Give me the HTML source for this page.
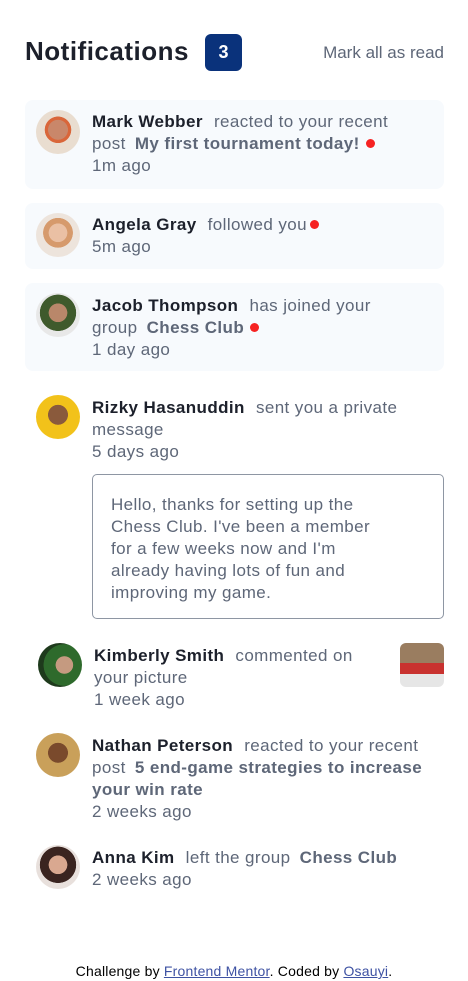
<!DOCTYPE html>
<html><head><meta charset="utf-8"><style>
*{margin:0;padding:0;box-sizing:border-box}
body{width:468px;height:981px;background:#fff;font-family:"Liberation Sans",sans-serif;color:#5e6778;position:relative;overflow:hidden}
.a{position:absolute}
h1{position:absolute;left:25px;top:36px;font-size:26px;font-weight:bold;color:#1c202b;letter-spacing:0.5px}
.badge{left:205px;top:34px;width:37px;height:37px;background:#0a327b;border-radius:6px;color:#fff;font-weight:bold;font-size:18px;text-align:center;line-height:37px}
.mark{right:24px;top:43px;font-size:17px}
.card{position:absolute;left:25px;width:419px;background:#f7fafd;border-radius:8px}
.av{position:absolute;width:44px;height:44px;border-radius:50%}
.t{position:absolute;font-size:17px;line-height:22px;white-space:nowrap;letter-spacing:0.4px}
.t b{color:#1c202b;margin-right:6px}
.t b.g{color:#5e6778;margin-left:4px;margin-right:0}
.dot{display:inline-block;width:9px;height:9px;border-radius:50%;background:#f62222;margin-left:6px;vertical-align:1px}
.msg{position:absolute;left:92px;top:474px;width:352px;height:145px;border:1px solid #8e96a3;border-radius:5px;padding:19px 18px;font-size:17px;line-height:22px;letter-spacing:0.4px}
.foot{position:absolute;left:0;width:468px;top:963px;text-align:center;font-size:14px;letter-spacing:0.2px;color:#000}
.foot span{color:#3e52a3;text-decoration:underline}
</style></head><body>
<h1>Notifications</h1>
<div class="a badge">3</div>
<div class="a mark">Mark all as read</div>

<div class="card" style="top:100px;height:89px"></div>
<div class="card" style="top:203px;height:66px"></div>
<div class="card" style="top:283px;height:88px"></div>

<div class="av" style="left:36px;top:110px;background:radial-gradient(circle at 50% 45%,#c9876a 0 30%,#d9663a 31% 40%,#e9ddd0 41%)"></div>
<div class="t" style="left:92px;top:111px"><b>Mark Webber</b> reacted to your recent<br>post <b class="g">My first tournament today!</b><span class="dot"></span><br>1m ago</div>

<div class="av" style="left:36px;top:213px;background:radial-gradient(circle at 50% 45%,#eac0a4 0 28%,#d69a6c 29% 45%,#ede4dc 46%)"></div>
<div class="t" style="left:92px;top:214px"><b>Angela Gray</b> followed you<span class="dot" style="margin-left:3px"></span><br>5m ago</div>

<div class="av" style="left:36px;top:293px;background:radial-gradient(circle at 50% 45%,#b9876a 0 28%,#3f5a2c 29% 55%,#e8e8e8 56%)"></div>
<div class="t" style="left:92px;top:295px"><b>Jacob Thompson</b> has joined your<br>group <b class="g">Chess Club</b><span class="dot"></span><br>1 day ago</div>

<div class="av" style="left:36px;top:395px;background:radial-gradient(circle at 50% 45%,#8a5a3c 0 30%,#f2c21a 31%)"></div>
<div class="t" style="left:92px;top:397px"><b>Rizky Hasanuddin</b> sent you a private<br>message<br>5 days ago</div>
<div class="msg">Hello, thanks for setting up the<br>Chess Club. I've been a member<br>for a few weeks now and I'm<br>already having lots of fun and<br>improving my game.</div>

<div class="av" style="left:38px;top:643px;background:radial-gradient(circle at 60% 50%,#c59a80 0 25%,#2e6a2c 26% 60%,#1e3a1c 61%)"></div>
<div class="t" style="left:94px;top:645px"><b>Kimberly Smith</b> commented on<br>your picture<br>1 week ago</div>
<div class="a" style="left:400px;top:643px;width:44px;height:44px;border-radius:6px;background:linear-gradient(#9a7d60 0 45%,#c8322f 46% 70%,#e6e6e6 71%)"></div>

<div class="av" style="left:36px;top:733px;background:radial-gradient(circle at 50% 45%,#7a4a2c 0 30%,#c9a05a 31%)"></div>
<div class="t" style="left:92px;top:735px"><b>Nathan Peterson</b> reacted to your recent<br>post <b class="g">5 end-game strategies to increase</b><br><b class="g" style="margin-left:0">your win rate</b><br>2 weeks ago</div>

<div class="av" style="left:36px;top:845px;background:radial-gradient(circle at 50% 45%,#d9a890 0 28%,#3a2420 29% 55%,#e8e0dc 56%)"></div>
<div class="t" style="left:92px;top:847px"><b>Anna Kim</b> left the group <b class="g">Chess Club</b><br>2 weeks ago</div>

<div class="foot">Challenge by <span>Frontend Mentor</span>. Coded by <span>Osauyi</span>.</div>
</body></html>
